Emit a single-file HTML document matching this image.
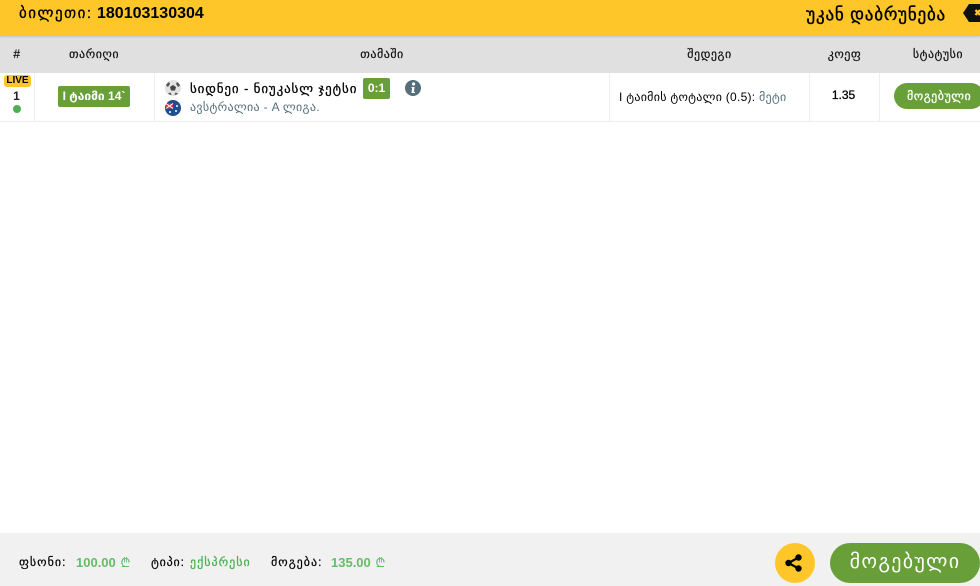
<!DOCTYPE html>
<html lang="ka"><head><meta charset="utf-8"><title>ბილეთი</title>
<style>
*{box-sizing:border-box;margin:0;padding:0}
html,body{width:980px;height:586px;overflow:hidden;background:#fff}
body{position:relative;font-family:"Liberation Sans","DejaVu Sans",sans-serif;color:#000;font-size:12px}
.a{position:absolute;white-space:nowrap}
.c{text-align:center}
.v{position:absolute;top:73px;width:1px;height:48px;background:#eee}
.h{top:47px;font-size:12px;line-height:14px;color:#111;letter-spacing:.5px;-webkit-text-stroke:.2px #111}
</style></head><body>
<div class="a" style="left:0;top:0;width:980px;height:36px;background:#fec629;box-shadow:0 1px 2px rgba(0,0,0,.12);z-index:2"></div>
<div class="a" style="left:19px;top:5px;font-size:16px;line-height:18px;font-weight:bold;z-index:3"><span style="font-size:15px;letter-spacing:1.5px;font-weight:normal;-webkit-text-stroke:.3px #000">ბილეთი:</span> 180103130304</div>
<div class="a" style="right:34px;top:5px;font-size:17px;line-height:20px;letter-spacing:.8px;-webkit-text-stroke:.4px #000;z-index:3">უკან დაბრუნება</div>
<svg class="a" style="left:962px;top:0;z-index:3" width="18" height="26" viewBox="0 0 18 26"><path d="M1 13L7 4H18V22H7Z" fill="#111"/><path d="M13.500 10l4.500 5m0-5l-4.500 5" stroke="#fec629" stroke-width="2.400" fill="none"/></svg>
<div class="a" style="left:0;top:36px;width:980px;height:37px;background:#e0e0e0"></div>
<div class="a h c" style="left:0;width:34px">#</div>
<div class="a h c" style="left:34px;width:120px">თარიღი</div>
<div class="a h c" style="left:155px;width:454px">თამაში</div>
<div class="a h c" style="left:610px;width:199px">შედეგი</div>
<div class="a h c" style="left:810px;width:69px">კოეფ</div>
<div class="a h c" style="left:888px;width:100px">სტატუსი</div>
<div class="a" style="left:0;top:121px;width:980px;height:1px;background:#eee"></div>
<div class="v" style="left:34px"></div><div class="v" style="left:154px"></div><div class="v" style="left:609px"></div><div class="v" style="left:809px"></div><div class="v" style="left:879px"></div>
<div class="a c" style="left:4px;top:75px;width:27px;height:12px;background:#fec629;border-radius:3px;font-size:10px;line-height:12px;font-weight:bold">LIVE</div>
<div class="a c" style="left:0;top:89px;width:33px;font-size:12px;line-height:14px;font-weight:bold;color:#222">1</div>
<div class="a" style="left:13px;top:105px;width:8px;height:8px;border-radius:50%;background:#4caf50"></div>
<div class="a c" style="left:58px;top:86px;width:72px;height:21px;background:#689f38;border-radius:2px;color:#fff;font-size:12px;line-height:20px;font-weight:bold">I ტაიმი 14`</div>
<svg class="a" style="left:165px;top:80px" width="16" height="16" viewBox="0 0 16 16"><circle cx="8" cy="8" r="8" fill="#e2e2e2"/><path d="M8 5l3 2-1 3.500H6L5 7Z" fill="#444"/><path d="M1 5.500C1.500 4 2.500 3 4 2l1 2-2 3ZM15 5.500C14.500 4 13.500 3 12 2l-1 2 2 3ZM3 13.500l2.500-1 1 2.500C5 15 4 14.500 3 13.500ZM13 13.500l-2.500-1-1 2.500C11 15 12 14.500 13 13.500Z" fill="#555"/></svg>
<div class="a" style="left:190px;top:81px;font-size:13px;line-height:16px;color:#000;letter-spacing:.87px;-webkit-text-stroke:.25px #000">სიდნეი - ნიუკასლ ჯეტსი</div>
<div class="a c" style="left:363px;top:78px;width:27px;height:21px;background:#689f38;border-radius:2px;color:#fff;font-size:12px;line-height:20px;font-weight:bold">0:1</div>
<svg class="a" style="left:405px;top:80px" width="16" height="16" viewBox="0 0 16 16"><circle cx="8" cy="8" r="8" fill="#546e7a"/><circle cx="8.600" cy="4" r="1.600" fill="#fff"/><path d="M6.500 7H9.600L8.800 12H10V13H6.400L7.200 8H6.500Z" fill="#fff"/></svg>
<svg class="a" style="left:165px;top:100px" width="16" height="16" viewBox="0 0 16 16"><circle cx="8" cy="8" r="8" fill="#1f4e8c"/><path d="M1 3.500H8V8.500H1.200Z" fill="#c8404c"/><path d="M1 3.500l7 5M8 3.500L1 8.500" stroke="#fff" stroke-width="1"/><circle cx="12" cy="6" r="1" fill="#fff"/><circle cx="11" cy="11" r="1" fill="#fff"/><circle cx="5" cy="12" r="1" fill="#fff"/></svg>
<div class="a" style="left:190px;top:100px;font-size:12px;line-height:15px;color:#546e7a;letter-spacing:.32px">ავსტრალია - A ლიგა.</div>
<div class="a" style="left:619px;top:90px;font-size:12px;line-height:15px;letter-spacing:.27px">I ტაიმის ტოტალი (0.5): <span style="color:#546e7a">მეტი</span></div>
<div class="a c" style="left:809px;top:88px;width:69px;font-size:12px;line-height:14px;-webkit-text-stroke:.3px #000">1.35</div>
<div class="a" style="left:894px;top:83px;width:90px;height:26px;background:#689f38;border-radius:13px"></div>
<div class="a" style="left:907px;top:83px;color:#fff;font-size:12px;line-height:26px;letter-spacing:.5px;-webkit-text-stroke:.3px #fff">მოგებული</div>
<div class="a" style="left:0;top:533px;width:980px;height:53px;background:#f1f1f1"></div>
<div class="a" style="left:19px;top:555px;font-size:12px;line-height:15px;letter-spacing:1px;-webkit-text-stroke:.2px #000">ფსონი:</div>
<div class="a" style="left:76px;top:555px;font-size:13px;line-height:15px;font-weight:bold;color:#66bb6a">100.00 <span style="font-weight:normal;margin-left:1px">₾</span></div>
<div class="a" style="left:151px;top:555px;font-size:12px;line-height:15px;letter-spacing:.8px;-webkit-text-stroke:.2px #000">ტიპი:</div>
<div class="a" style="left:190px;top:555px;font-size:12px;line-height:15px;color:#4caf50;letter-spacing:1px;-webkit-text-stroke:.25px #4caf50">ექსპრესი</div>
<div class="a" style="left:271px;top:555px;font-size:12px;line-height:15px;letter-spacing:1px;-webkit-text-stroke:.2px #000">მოგება:</div>
<div class="a" style="left:331px;top:555px;font-size:13px;line-height:15px;font-weight:bold;color:#66bb6a">135.00 <span style="font-weight:normal;margin-left:1px">₾</span></div>
<div class="a" style="left:775px;top:543px;width:40px;height:40px;border-radius:50%;background:#fec629"></div>
<svg class="a" style="left:785px;top:554px" width="18" height="18" viewBox="0 0 18 18"><circle cx="13.500" cy="3.500" r="3.200" fill="#000"/><circle cx="3.500" cy="9" r="3.200" fill="#000"/><circle cx="13.500" cy="14.500" r="3.200" fill="#000"/><path d="M13.500 3.500L3.500 9L13.500 14.500" stroke="#000" stroke-width="2.200" fill="none"/></svg>
<div class="a c" style="left:830px;top:543px;width:150px;height:40px;background:#689f38;border-radius:20px;color:#fff;font-size:20px;line-height:39px;letter-spacing:1.300px">მოგებული</div>
</body></html>
